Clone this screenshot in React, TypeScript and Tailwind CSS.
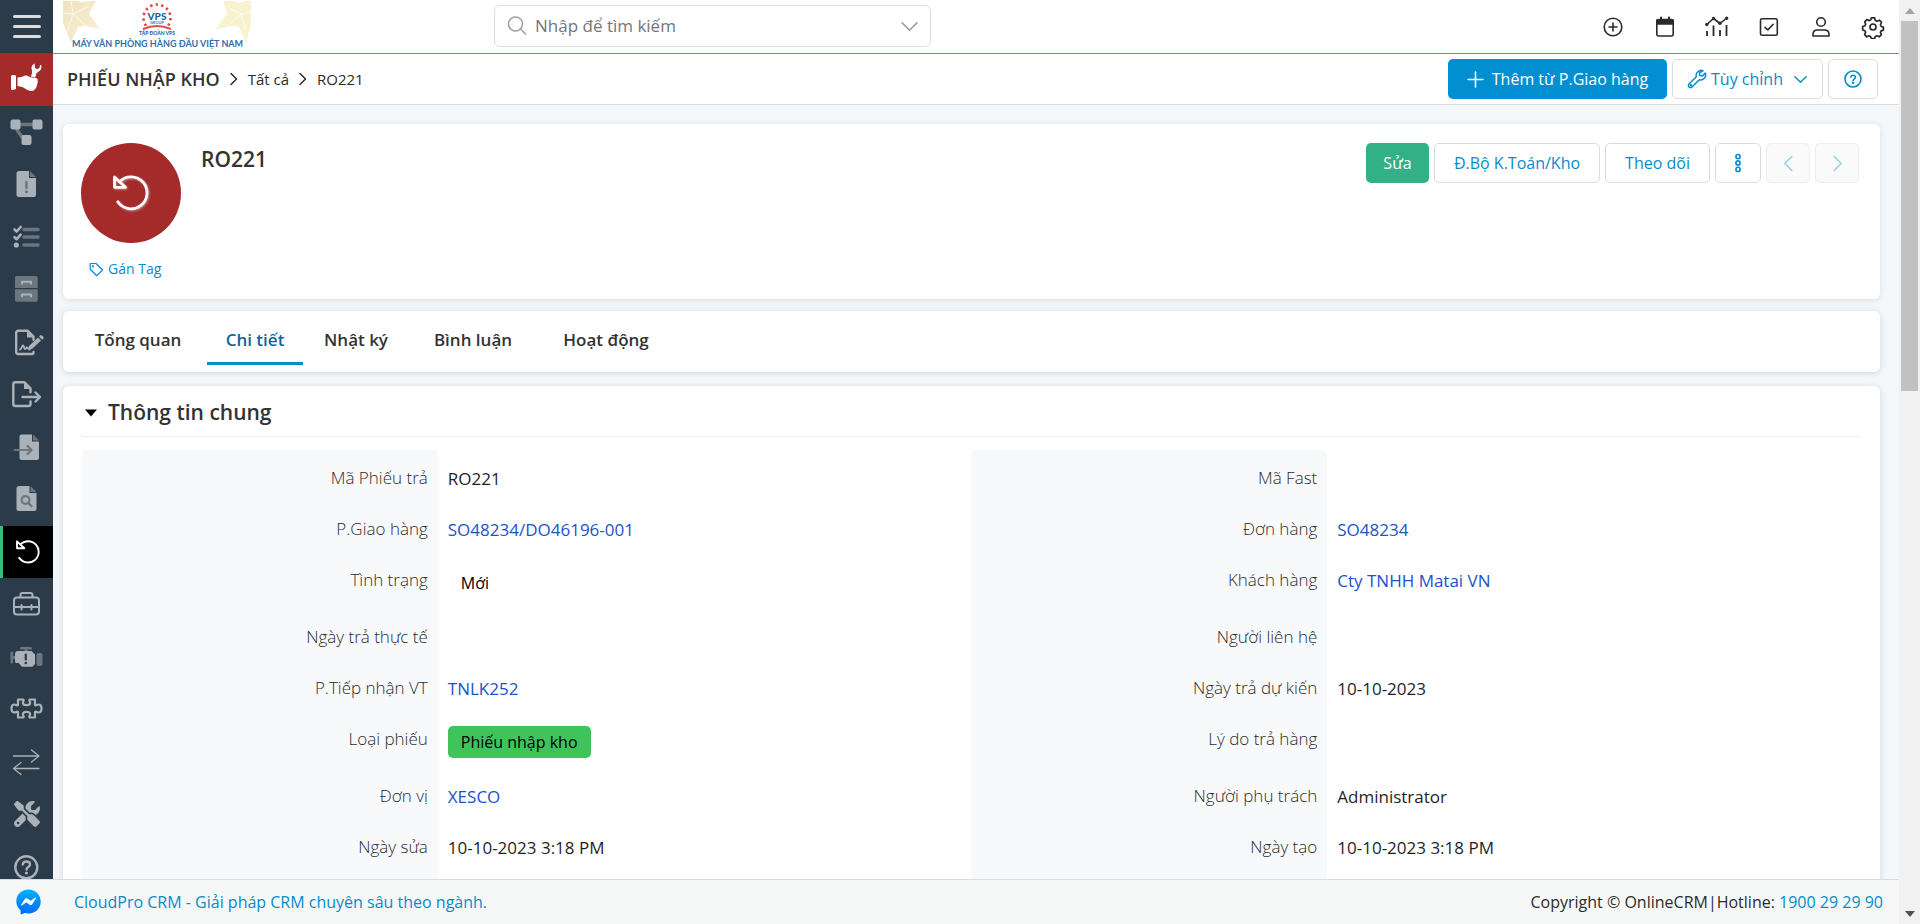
import React from 'react';
import { FaScrewdriverWrench } from 'react-icons/fa6';

type Field = {
    label: string;
    value?: string;
    kind?: 'link' | 'badge' | 'plain-badge';
};

const ROWS: { left: Field; right: Field; height: string }[] = [
    { left: { label: 'Mã Phiếu trả', value: 'RO221' }, right: { label: 'Mã Fast' }, height: 'h-[51px]' },
    { left: { label: 'P.Giao hàng', value: 'SO48234/DO46196-001', kind: 'link' }, right: { label: 'Đơn hàng', value: 'SO48234', kind: 'link' }, height: 'h-[51px]' },
    { left: { label: 'Tình trạng', value: 'Mới', kind: 'plain-badge' }, right: { label: 'Khách hàng', value: 'Cty TNHH Matai VN', kind: 'link' }, height: 'h-[57px]' },
    { left: { label: 'Ngày trả thực tế' }, right: { label: 'Người liên hệ' }, height: 'h-[51px]' },
    { left: { label: 'P.Tiếp nhận VT', value: 'TNLK252', kind: 'link' }, right: { label: 'Ngày trả dự kiến', value: '10-10-2023' }, height: 'h-[51px]' },
    { left: { label: 'Loại phiếu', value: 'Phiếu nhập kho', kind: 'badge' }, right: { label: 'Lý do trả hàng' }, height: 'h-[57px]' },
    { left: { label: 'Đơn vị', value: 'XESCO', kind: 'link' }, right: { label: 'Người phụ trách', value: 'Administrator' }, height: 'h-[51px]' },
    { left: { label: 'Ngày sửa', value: '10-10-2023 3:18 PM' }, right: { label: 'Ngày tạo', value: '10-10-2023 3:18 PM' }, height: 'h-20' },
];

const TABS = [
    { label: 'Tổng quan', width: 'w-32' },
    { label: 'Chi tiết', width: 'w-24', active: true },
    { label: 'Nhật ký', width: 'w-24' },
    { label: 'Bình luận', width: 'w-32' },
    { label: 'Hoạt động', width: 'w-32' },
];

const UndoIcon = ({ className }: { className?: string }) => (
    <svg viewBox="0 0 36 36" fill="none" stroke="currentColor" strokeWidth="2.8" strokeLinejoin="round" strokeLinecap="round" className={className}>
        <path d="M1.5 2V12.3H12.5Z" />
        <path d="M6.5 6.7A16 16 0 1 1 4.8 26.8" />
    </svg>
);

// Sidebar icons share a 53x52 box, light = main tone, dim = secondary tone
const LIGHT = '#abb1b8';
const DIM = '#6b7681';
const BG = '#2c3b49';

const MenuSvg = ({ children }: { children: React.ReactNode }) => (
    <svg viewBox="0 0 53 52" width="53" height="52" fill="none" strokeLinecap="round" strokeLinejoin="round">
        {children}
    </svg>
);

const MENU: { label: string; icon: React.ReactNode; state?: 'brand' | 'active' }[] = [
    {
        label: 'Dịch vụ',
        state: 'brand',
        icon: (
            <MenuSvg>
                <g fill="#fff">
                    <path d="M12.5 22h2a1.5 1.5 0 0 1 1.5 1.5V35a1.5 1.5 0 0 1-1.5 1.5l-2 .5A1.5 1.5 0 0 1 11 35.500V23.500A1.500 1.500 0 0 1 12.500 22z" />
                    <path d="M17.500 24.500l4-.5c1.800-.8 3-1.500 4.500-1.500 1.800 0 3 1.200 4.500 1.700l5.500.8c1.500.3 2 1.500 1.500 2.700.6 1 .3 2.200-.3 2.900.3 1.200 0 2.200-.8 2.800.1 1.400-.5 2.300-1.600 2.700-.6 1.700-2 2.200-4 1.900-4-.8-6-2.800-8.500-4.100l-4.800-.9z" />
                    <path d="M34.500 10.500c-2.600 1.300-3.700 3.900-2.600 6.800.4 1 .4 1.700.1 2.700l-1.100 3.400 4.300 1.100 1.100-3.600c.3-1 .8-1.500 1.800-2 2.700-1.300 4-3.600 3.200-6.600l-1.200-.2-.7 2.900-2.300 1.200-2.200-1.500-.1-2.500z" />
                </g>
            </MenuSvg>
        ),
    },
    {
        label: 'Quy trình',
        icon: (
            <MenuSvg>
                <path d="M21 18.500h11M17 24l5 7" stroke={DIM} strokeWidth="3.500" />
                <g fill={LIGHT}>
                    <rect x="10.500" y="13.500" width="10" height="10" rx="2" />
                    <rect x="32.500" y="13.500" width="10" height="10" rx="2" />
                    <rect x="21.500" y="29" width="10" height="10" rx="2" />
                </g>
            </MenuSvg>
        ),
    },
    {
        label: 'Cảnh báo',
        icon: (
            <MenuSvg>
                <path d="M19 13h10v7h7v17a2 2 0 0 1-2 2H18.500a2 2 0 0 1-2-2V15.500A2.500 2.500 0 0 1 19 13z" fill={LIGHT} />
                <path d="M30 13l6 6h-6z" fill={DIM} />
                <path d="M26.400 24v6" stroke={DIM} strokeWidth="2.400" />
                <circle cx="26.400" cy="33.700" r="1.500" fill={DIM} />
            </MenuSvg>
        ),
    },
    {
        label: 'Công việc',
        icon: (
            <MenuSvg>
                <path d="M24 18.500h14M24 26h14M24 34h14" stroke={DIM} strokeWidth="3.600" />
                <path d="M14.500 18.500l2.200 2 4-4.500M14.500 26.200l2.200 2 4-4.500" stroke={LIGHT} strokeWidth="2.600" />
                <circle cx="16.300" cy="34" r="2.600" fill={LIGHT} />
            </MenuSvg>
        ),
    },
    {
        label: 'Lưu trữ',
        icon: (
            <MenuSvg>
                <path d="M17 13h19a1.700 1.700 0 0 1 1.700 1.700V25H15V14.700A1.700 1.700 0 0 1 17 13zM15 26.300h22.700V37a1.700 1.700 0 0 1-1.700 1.700H17A1.700 1.700 0 0 1 15 37z" fill={DIM} />
                <path d="M22 20.800v-2h9v2M22 33.600v-2h9v2" stroke={LIGHT} strokeWidth="2" />
            </MenuSvg>
        ),
    },
    {
        label: 'Hợp đồng',
        icon: (
            <MenuSvg>
                <path d="M33.500 36v.500a1.500 1.500 0 0 1-1.500 1.500H18a1.800 1.800 0 0 1-1.800-1.800V16.500A1.800 1.800 0 0 1 18 14.700h9.500l6 6v3" stroke={LIGHT} strokeWidth="2.400" />
                <path d="M27 14.500v7h7z" fill={LIGHT} />
                <path d="M20 33.500c1.500 0 1.800-4 3-4s.8 3.500 2 3.500 1-1.500 2-1.500 1 2 2.500 2" stroke={LIGHT} strokeWidth="1.800" />
                <path d="M29 30l9-8.500 3 3-9 8.500-3.800.8z" fill={LIGHT} />
                <path d="M39 20.600l1-1c.6-.6 1.400-.6 2 0l1.200 1.200c.6.6.6 1.400 0 2l-1 1z" fill={LIGHT} />
            </MenuSvg>
        ),
    },
    {
        label: 'Phiếu xuất',
        icon: (
            <MenuSvg>
                <path d="M30.500 33.500V36a2 2 0 0 1-2 2H15.300a2 2 0 0 1-2-2V16.300a2 2 0 0 1 2-2h9.200l6 6v4" stroke={LIGHT} strokeWidth="2.400" />
                <path d="M24 14v7h7z" fill={LIGHT} />
                <path d="M22.500 29h17M35.500 24.500l4.500 4.500-4.500 4.500" stroke={LIGHT} strokeWidth="2.400" />
            </MenuSvg>
        ),
    },
    {
        label: 'Phiếu nhập',
        icon: (
            <MenuSvg>
                <path d="M21.500 13.500H32v7h7V37a2 2 0 0 1-2 2H21.500a2 2 0 0 1-2-2V15.500a2 2 0 0 1 2-2z" fill={LIGHT} />
                <path d="M33 13.500l6 6h-6z" fill={DIM} />
                <path d="M14.500 29H31M27.500 25l4 4-4 4" stroke={DIM} strokeWidth="2.200" />
            </MenuSvg>
        ),
    },
    {
        label: 'Tra cứu',
        icon: (
            <MenuSvg>
                <path d="M19 13h10.500v7h7v16a2 2 0 0 1-2 2h-16a2 2 0 0 1-2-2V15.500A2.500 2.500 0 0 1 19 13z" fill={LIGHT} />
                <path d="M30.500 13l6 6h-6z" fill={DIM} />
                <circle cx="25.500" cy="27" r="3.900" stroke={DIM} strokeWidth="2.200" />
                <path d="M28.500 30l3 3.200" stroke={DIM} strokeWidth="2.400" />
            </MenuSvg>
        ),
    },
    { label: 'Phiếu nhập kho', state: 'active', icon: <UndoIcon className="size-6 text-white" /> },
    {
        label: 'Dụng cụ',
        icon: (
            <MenuSvg>
                <g stroke={LIGHT} strokeWidth="2">
                    <rect x="14" y="19.500" width="25" height="17" rx="3" />
                    <path d="M20.500 19v-2a2 2 0 0 1 2-2h8a2 2 0 0 1 2 2v2M14 29h25M21.500 27v4.500M31.500 27v4.500" />
                </g>
            </MenuSvg>
        ),
    },
    {
        label: 'Thiết bị',
        icon: (
            <MenuSvg>
                <g fill={DIM}>
                    <rect x="20" y="16" width="12" height="2.600" rx="1.200" />
                    <rect x="24.500" y="17" width="3" height="4" />
                    <rect x="10.500" y="20.500" width="2.600" height="12" rx="1.200" />
                    <rect x="12" y="25" width="4" height="3" />
                    <rect x="36.500" y="22" width="6" height="13" rx="2" />
                </g>
                <path d="M18 20h13.500l3.500 3.500V33l-2.500 2.700H22L18.500 32H16.500a1.500 1.500 0 0 1-1.500-1.500V23a3 3 0 0 1 3-3z" fill={LIGHT} />
                <path d="M25.800 23.500v5" stroke={BG} strokeWidth="2.200" />
                <circle cx="25.800" cy="32" r="1.300" fill={BG} />
            </MenuSvg>
        ),
    },
    {
        label: 'Tích hợp',
        icon: (
            <MenuSvg>
                <path
                    d="M18 16.500h5.500c.8 1.200-.6 1.800-.6 3.300 0 1.400 1.600 2.400 3.600 2.400s3.600-1 3.600-2.400c0-1.500-1.400-2.100-.6-3.300H35v5.600c1.200.9 1.900-.6 3.500-.6 1.700 0 3 1.700 3 4s-1.300 4-3 4c-1.600 0-2.300-1.500-3.500-.6v5.600h-5.500c-.8-1.200.6-1.800.6-3.300 0-1.400-1.600-2.400-3.600-2.400s-3.600 1-3.600 2.400c0 1.500 1.400 2.100.6 3.300H18v-5.600c-1.200-.9-1.900.6-3.500.6-1.700 0-3-1.700-3-4s1.300-4 3-4c1.600 0 2.300 1.500 3.500.6z"
                    stroke={LIGHT}
                    strokeWidth="2.200"
                />
            </MenuSvg>
        ),
    },
    {
        label: 'Chuyển đổi',
        icon: (
            <MenuSvg>
                <path d="M13.500 20H39M31.500 14l7.500 6-7.500 6M39 32.500H13.500M21 26.500l-7.500 6 7.500 6" stroke={LIGHT} strokeWidth="1.300" />
            </MenuSvg>
        ),
    },
    { label: 'Cấu hình', icon: <FaScrewdriverWrench className="size-[26px] text-[#abb1b8]" /> },
    {
        label: 'Trợ giúp',
        icon: (
            <MenuSvg>
                <circle cx="26.300" cy="26.300" r="11" stroke={LIGHT} strokeWidth="2.400" />
                <path d="M22.800 23.500c.2-2 1.700-3 3.500-3 2.100 0 3.700 1.200 3.700 3 0 2.500-3.500 2.500-3.500 5" stroke={LIGHT} strokeWidth="2.400" />
                <circle cx="26.400" cy="32" r="1.600" fill={LIGHT} />
            </MenuSvg>
        ),
    },
];

const STROKE = { fill: 'none', stroke: '#2b2b2b', strokeWidth: 1.6, strokeLinecap: 'round', strokeLinejoin: 'round' } as const;

const TOP_ICONS: { label: string; icon: React.ReactNode }[] = [
    {
        label: 'Thêm nhanh',
        icon: (
            <g {...STROKE}>
                <circle cx="12" cy="12" r="8.800" />
                <path d="M12 8v8M8 12h8" />
            </g>
        ),
    },
    {
        label: 'Lịch',
        icon: (
            <g {...STROKE}>
                <rect x="3.800" y="4.500" width="16.400" height="16.500" rx="2" />
                <path d="M4 5h16v4H4z" fill="#2b2b2b" />
                <path d="M8 2.600v3M16 2.600v3" strokeWidth="2" />
            </g>
        ),
    },
    {
        label: 'Báo cáo',
        icon: (
            <g {...STROKE}>
                <path d="M1.800 9.500L8.500 3.500l6.500 5 6.700-5.500" />
                <circle cx="1.800" cy="9.500" r=".9" fill="#2b2b2b" />
                <circle cx="8.500" cy="3.500" r=".9" fill="#2b2b2b" />
                <circle cx="15" cy="8.300" r=".9" fill="#2b2b2b" />
                <circle cx="21.700" cy="3.200" r=".9" fill="#2b2b2b" />
                <path d="M2 16v5M8.500 10.500V21M15 15v6M21.500 10v11" strokeLinecap="butt" strokeWidth="1.800" />
            </g>
        ),
    },
    {
        label: 'Công việc',
        icon: (
            <g {...STROKE}>
                <rect x="3.500" y="3.800" width="16.800" height="16.500" rx="1.600" />
                <path d="M8 12.300l2.800 2.600 5.400-5.600" />
            </g>
        ),
    },
    {
        label: 'Tài khoản',
        icon: (
            <g {...STROKE}>
                <circle cx="12" cy="7" r="4.300" />
                <path d="M4 21v-1.500C4 16.500 6 15 8.500 15h7c2.500 0 4.500 1.500 4.500 4.500V21z" />
            </g>
        ),
    },
    {
        label: 'Cài đặt',
        icon: (
            <g {...STROKE} strokeWidth="1.700">
                <circle cx="12" cy="12" r="3" />
                <path d="M10.300 2.800h3.400l.5 2.500 1.700.9 2.500-1 2.100 2.100-1 2.500.7 1.700 2.200.6v3l-2.300.8-.7 1.600 1 2.200-2.100 2.100-2.300-1-1.700.8-.7 2.100h-3.200l-.8-2.200-1.600-.7-2.300 1-2.100-2.100 1-2.300-.7-1.600-2.200-.8V11.500l2.200-.7.800-1.700-1-2.300 2.100-2.200 2.400 1 1.600-.8z" />
            </g>
        ),
    },
];

const Logo = () => (
    <svg viewBox="0 0 188 52" width="188" height="52" role="img" aria-label="VPS Group">
        <defs>
            <linearGradient id="goldLeft" x1="0" x2="1" y1="0" y2="1">
                <stop offset="0" stopColor="#efe3bd" />
                <stop offset="1" stopColor="#f8f1d8" />
            </linearGradient>
        </defs>
        <path d="M0 1h15l3 1 10-1h5l-5 9-2 4 11 15-16-3-6 1-7 16L0 23z" fill="url(#goldLeft)" />
        <path d="M8 1l2 13-10-1M10 14l16-8M10 14l13 12M10 14L5 30" stroke="#fff" strokeWidth="1" fill="none" opacity=".7" />
        <path d="M160 1h12l3 2 8-2h5v22l-5 20-7-16-6-1-17 3 11-15-1-4z" fill="#f9f2cf" />
        <path d="M178 14L163 6M178 14l10-2M178 14l-14 12M178 14l5 16" stroke="#fff" strokeWidth="1" fill="none" opacity=".7" />
        <circle cx="94" cy="18" r="13.500" fill="none" stroke="#e2464c" strokeWidth="2.600" strokeDasharray="2.600 3.400" pathLength="90" />
        <path d="M76 26h36v11H76z" fill="#fff" />
        <path d="M80 29q14-6 28 0" fill="none" stroke="#e0504c" strokeWidth="2" />
        <text x="94" y="19.500" textAnchor="middle" fontSize="10" fontWeight="900" fontFamily="Lato, sans-serif" fill="#1d63a8">VPS</text>
        <text x="94" y="24" textAnchor="middle" fontSize="4" fontWeight="700" fontFamily="Lato, sans-serif" fill="#3a78b3">GROUP</text>
        <text x="94" y="35" textAnchor="middle" fontSize="5" fontWeight="900" fontFamily="Lato, sans-serif" fill="#1d63a8">TẬP ĐOÀN VPS</text>
        <text x="94.500" y="46.500" textAnchor="middle" fontSize="9" fontWeight="700" fontFamily="Lato, sans-serif" fill="#2f6fae">MÁY VĂN PHÒNG HÀNG ĐẦU VIỆT NAM</text>
    </svg>
);

const Chevron = ({ d, className }: { d: string; className: string }) => (
    <svg viewBox="0 0 16 16" fill="none" stroke="currentColor" strokeWidth="1.500" strokeLinecap="round" strokeLinejoin="round" className={className}>
        <path d={d} />
    </svg>
);

const FieldValue = ({ field }: { field: Field }) => {
    if (!field.value) return null;
    if (field.kind === 'link') {
        return <a href="#" className="text-[#1a53c6]">{field.value}</a>;
    }
    if (field.kind === 'badge') {
        return <span className="inline-flex h-8 items-center rounded-[5px] bg-[#3fc35b] px-[13px] align-top text-base text-black">{field.value}</span>;
    }
    if (field.kind === 'plain-badge') {
        return <span className="inline-flex h-8 items-center px-[13px] align-top text-base text-black">{field.value}</span>;
    }
    return <>{field.value}</>;
};

const outlineBtn = 'flex h-10 items-center justify-center rounded-[5px] border border-[#dcdcdc] bg-white text-[#078bcb]';

export default function App() {
    return (
        <div className="flex h-screen overflow-hidden bg-[#f3f7fa] font-['Open_Sans','Noto_Sans',sans-serif] text-base text-[#2b2b2b]">
            <div className="flex min-w-0 flex-1 flex-col">
                <div className="flex min-h-0 flex-1">
                    {/* Sidebar */}
                    <nav aria-label="Menu chính" className="flex w-[53px] shrink-0 flex-col bg-[#2c3b49]">
                        <button aria-label="Mở menu" className="flex h-[53px] shrink-0 flex-col items-center justify-center gap-[7px]">
                            <span className="h-[3px] w-7 rounded-full bg-[#d9dce0]" />
                            <span className="h-[3px] w-7 rounded-full bg-[#d9dce0]" />
                            <span className="h-[3px] w-7 rounded-full bg-[#d9dce0]" />
                        </button>
                        <div className="-mb-[14px] grid min-h-0 flex-1 auto-rows-fr">
                            {MENU.map((item) => (
                                <a
                                    key={item.label}
                                    href="#"
                                    aria-label={item.label}
                                    className={
                                        item.state === 'brand'
                                            ? 'flex min-h-0 items-center justify-center bg-[#a52a2a]'
                                            : item.state === 'active'
                                              ? 'flex min-h-0 items-center justify-center border-l-[3px] border-[#3cb878] bg-black'
                                              : 'flex min-h-0 items-center justify-center'
                                    }
                                >
                                    {item.icon}
                                </a>
                            ))}
                        </div>
                    </nav>

                    <div className="flex min-w-0 flex-1 flex-col">
                        {/* Top bar */}
                        <header className="flex h-[54px] shrink-0 items-start border-b border-[#3cb371] bg-white pl-[10px] pr-3">
                            <a href="#" className="shrink-0"><Logo /></a>
                            <div className="ml-[243px] mt-[5px] flex h-[42px] w-[437px] items-center rounded-md border border-[#dedede] px-3">
                                <svg viewBox="0 0 20 20" className="size-5 shrink-0" fill="none" stroke="#a3a3a3" strokeWidth="1.600" strokeLinecap="round">
                                    <circle cx="8.500" cy="8" r="7" />
                                    <path d="M13.500 13l5 5" />
                                </svg>
                                <input
                                    type="text"
                                    aria-label="Tìm kiếm"
                                    placeholder="Nhập để tìm kiếm"
                                    className="ml-2 min-w-0 flex-1 bg-transparent text-[17px] outline-none placeholder:text-[#757575]"
                                />
                                <button aria-label="Chọn phạm vi"><Chevron d="M1 4.500l7 7 7-7" className="size-[17px] text-[#999999]" /></button>
                            </div>
                            <div className="ml-auto flex h-[54px] items-center gap-6">
                                {TOP_ICONS.map((item) => (
                                    <button key={item.label} aria-label={item.label} className="flex w-7 justify-center">
                                        <svg viewBox="0 0 24 24" width="24" height="24">{item.icon}</svg>
                                    </button>
                                ))}
                            </div>
                        </header>

                        {/* Breadcrumb and module actions */}
                        <div className="flex h-[51px] shrink-0 items-center border-b border-[#dddddd] bg-white pl-[14px] pr-[21px]">
                            <a href="#" className="text-lg font-semibold text-[#333333]">PHIẾU NHẬP KHO</a>
                            <Chevron d="M5 2.500L10.500 8 5 13.500" className="mx-1.5 size-4" />
                            <a href="#" className="text-[15px]">Tất cả</a>
                            <Chevron d="M5 2.500L10.500 8 5 13.500" className="mx-1.5 size-4" />
                            <span className="text-[15px]">RO221</span>
                            <div className="ml-auto flex gap-[5px]">
                                <button className="flex h-10 w-[219px] items-center justify-center gap-2 rounded-[5px] bg-[#028fd2] text-white">
                                    <Chevron d="M8 1v14M1 8h14" className="size-[17px]" />
                                    Thêm từ P.Giao hàng
                                </button>
                                <button className={`${outlineBtn} w-[151px] gap-1`}>
                                    <svg viewBox="0 0 20 20" className="size-5" fill="none" stroke="currentColor" strokeWidth="1.500" strokeLinejoin="round">
                                        <path d="M16 1.800a5 5 0 0 0-6.700 6L2 15a2 2 0 0 0 3 3l7.300-7.300a5 5 0 0 0 6-6.600l-2.900 2.800-2.600-.4-.4-2.600z" />
                                        <circle cx="3.900" cy="16.200" r=".5" fill="currentColor" />
                                    </svg>
                                    Tùy chỉnh
                                    <Chevron d="M2 5l6 6 6-6" className="ml-1.5 size-[15px]" />
                                </button>
                                <button aria-label="Trợ giúp" className={`${outlineBtn} w-[50px]`}>
                                    <svg viewBox="0 0 18 18" className="size-[18px]" fill="none" stroke="currentColor" strokeWidth="1.600" strokeLinecap="round">
                                        <circle cx="9" cy="9" r="8" />
                                        <path d="M6.800 7.200C7 5.800 8 5.200 9.100 5.200c1.300 0 2.300.8 2.300 2 0 1.600-2.300 1.600-2.300 3.300" />
                                        <circle cx="9.100" cy="12.800" r=".5" fill="currentColor" />
                                    </svg>
                                </button>
                            </div>
                        </div>

                        <main className="flex min-h-0 flex-1 flex-col overflow-hidden pl-[10px] pr-[19px] pt-[19px]">
                            {/* Record summary */}
                            <section className="flex h-[175px] shrink-0 items-start rounded-md bg-white px-[18px] pr-[21px] pt-[19px] shadow-[0_1px_6px_rgba(0,0,0,0.1)]">
                                <div className="flex w-[100px] flex-col">
                                    <div className="flex size-[100px] items-center justify-center rounded-full bg-[#a52a2a]">
                                        <UndoIcon className="size-9 text-white drop-shadow-[1px_1px_1px_rgba(255,255,255,0.4)]" />
                                    </div>
                                    <a href="#" className="mt-4 flex items-center gap-1 whitespace-nowrap pl-2 text-sm text-[#078bcb]">
                                        <svg viewBox="0 0 15 15" className="size-[15px]" fill="none" stroke="currentColor" strokeWidth="1.200" strokeLinejoin="round">
                                            <path d="M1.200 2v5.200l6.600 6.500 5.700-5.700L7 1.500H1.700z" />
                                            <circle cx="4" cy="4.300" r=".5" fill="currentColor" />
                                        </svg>
                                        Gán Tag
                                    </a>
                                </div>
                                <h1 className="ml-5 text-[21px] leading-8 font-semibold text-[#333333]">RO221</h1>
                                <div className="ml-auto flex gap-[5px]">
                                    <button className="h-10 w-[63px] rounded-[5px] bg-[#32b186] text-white">Sửa</button>
                                    <button className={`${outlineBtn} w-[166px]`}>Đ.Bộ K.Toán/Kho</button>
                                    <button className={`${outlineBtn} w-[105px]`}>Theo dõi</button>
                                    <button aria-label="Thêm thao tác" className={`${outlineBtn} w-[46px]`}>
                                        <svg viewBox="0 0 8 20" width="8" height="20" fill="none" stroke="currentColor" strokeWidth="1.600">
                                            <circle cx="4" cy="3.600" r="2.100" />
                                            <circle cx="4" cy="10" r="2.100" />
                                            <circle cx="4" cy="16.400" r="2.100" />
                                        </svg>
                                    </button>
                                    <button disabled aria-label="Bản ghi trước" className="flex h-10 w-11 items-center justify-center rounded-[5px] border border-[#eeeeee] bg-[#fafafa] text-[#9bd1ec]">
                                        <Chevron d="M11 1.500L4.500 8l6.500 6.500" className="size-[17px]" />
                                    </button>
                                    <button disabled aria-label="Bản ghi sau" className="flex h-10 w-11 items-center justify-center rounded-[5px] border border-[#eeeeee] bg-[#fafafa] text-[#9bd1ec]">
                                        <Chevron d="M5 1.500L11.500 8 5 14.500" className="size-[17px]" />
                                    </button>
                                </div>
                            </section>

                            {/* Tabs */}
                            <div role="tablist" className="mt-3 flex h-[61px] shrink-0 gap-[5px] rounded-md bg-white px-[11px] shadow-[0_1px_6px_rgba(0,0,0,0.14)]">
                                {TABS.map((tab) => (
                                    <button
                                        key={tab.label}
                                        role="tab"
                                        aria-selected={!!tab.active}
                                        className={
                                            tab.active
                                                ? `${tab.width} h-[54px] border-b-[3px] border-[#028fd2] pt-1.5 text-[17px] font-semibold text-[#0d6699]`
                                                : `${tab.width} h-[54px] border-b-[3px] border-transparent pt-1.5 text-[17px] font-semibold text-[#333333]`
                                        }
                                    >
                                        {tab.label}
                                    </button>
                                ))}
                            </div>

                            {/* General information */}
                            <section className="mt-[14px] shrink-0 rounded-md bg-white px-[19px] shadow-[0_1px_6px_rgba(0,0,0,0.14)]">
                                <h2 className="flex h-[51px] items-center border-b border-[#eeeeee] pt-1 text-[21px] font-semibold text-[#333333]">
                                    <button className="flex items-center">
                                        <svg viewBox="0 0 12 8" width="12" height="8" className="mx-[3px]">
                                            <path d="M0 .5h12L6 7.500z" fill="#000" />
                                        </svg>
                                        <span className="ml-2">Thông tin chung</span>
                                    </button>
                                </h2>
                                <table className="mt-[13px] w-full table-fixed border-separate border-spacing-0">
                                    <colgroup>
                                        <col className="w-1/5" />
                                        <col className="w-[30%]" />
                                        <col className="w-1/5" />
                                        <col className="w-[30%]" />
                                    </colgroup>
                                    <tbody>
                                        {ROWS.map((row, index) => (
                                            <tr key={row.left.label} className={row.height}>
                                                {[row.left, row.right].map((field) => (
                                                    <React.Fragment key={field.label}>
                                                        <th
                                                            scope="row"
                                                            className={`${index === 0 ? 'rounded-t-[5px]' : ''} bg-[#f8f9fb] pr-[10px] pt-[14px] text-right align-top text-[17px] leading-[27px] font-light text-[#2b2b2b]`}
                                                        >
                                                            {field.label}
                                                        </th>
                                                        <td className="pl-[10px] pt-[15px] align-top text-[17px] leading-7 text-[#1f1f1f]">
                                                            <FieldValue field={field} />
                                                        </td>
                                                    </React.Fragment>
                                                ))}
                                            </tr>
                                        ))}
                                    </tbody>
                                </table>
                            </section>
                        </main>
                    </div>
                </div>

                {/* Footer */}
                <footer className="relative flex h-[45px] shrink-0 items-center border-t border-[#dcdcdc] bg-[#f6f8f8] pl-4 pr-4">
                    <a href="#" aria-label="Messenger">
                        <svg viewBox="0 0 25 26" width="25" height="26">
                            <defs>
                                <linearGradient id="messenger" x1="0" x2="0" y1="0" y2="1">
                                    <stop offset="0" stopColor="#00b2ff" />
                                    <stop offset="1" stopColor="#006aff" />
                                </linearGradient>
                            </defs>
                            <path d="M12.500.5C5.600.5.300 5.500.300 12.300c0 3.500 1.500 6.600 3.900 8.700.3.300.4.600.4 1v2.300c0 .7.700 1.200 1.400.9l2.600-1.100c.3-.1.500-.1.700 0 1 .2 2.100.4 3.200.4 6.900 0 12.200-5 12.200-12S19.400.500 12.500.500z" fill="url(#messenger)" />
                            <path d="M5.200 15.700l3.600-5.700c.6-.9 1.800-1.100 2.600-.5l2.900 2.100c.2.200.6.200.8 0l3.900-2.900c.5-.4 1.200.2.800.8l-3.600 5.700c-.6.900-1.800 1.100-2.600.500l-2.900-2.100c-.2-.2-.6-.2-.8 0L6 16.500c-.5.400-1.200-.2-.8-.8z" fill="#fff" />
                        </svg>
                    </a>
                    <a href="#" className="ml-[33px] text-[#078bcb]">CloudPro CRM - Giải pháp CRM chuyên sâu theo ngành.</a>
                    <span className="ml-auto">
                        Copyright © OnlineCRM|Hotline: <a href="#" className="text-[#078bcb]">1900 29 29 90</a>
                    </span>
                </footer>
            </div>

            {/* Scroll track */}
            <div className="flex w-[21px] shrink-0 flex-col items-center bg-[#f1f1f1]">
                <div className="flex h-[21px] shrink-0 items-center">
                    <svg viewBox="0 0 10 6" width="10" height="6"><path d="M0 6h10L5 0z" fill="#a3a3a3" /></svg>
                </div>
                <div className="h-2/5 w-[17px] bg-[#c1c1c1]" />
                <div className="mt-auto flex h-[21px] shrink-0 items-center">
                    <svg viewBox="0 0 10 6" width="10" height="6"><path d="M0 0h10L5 6z" fill="#505050" /></svg>
                </div>
            </div>
        </div>
    );
}
